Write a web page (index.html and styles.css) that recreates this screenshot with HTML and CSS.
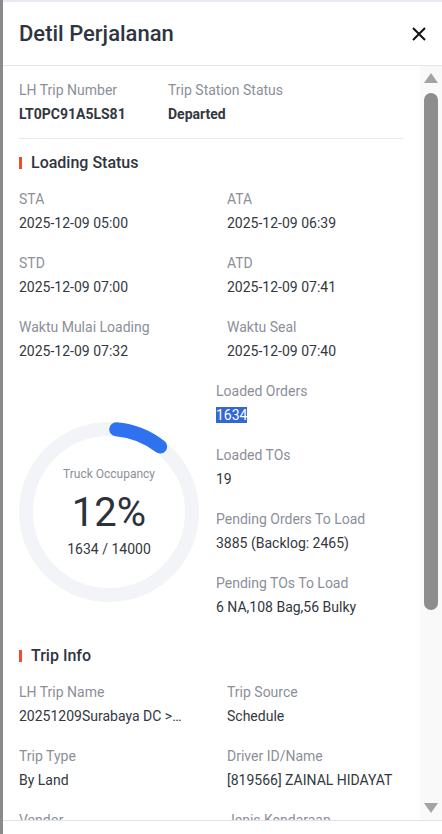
FILE: index.html
```html
<!DOCTYPE html>
<html lang="id">
<head>
  <meta charset="UTF-8" />
  <title>Detil Perjalanan</title>
  <link rel="stylesheet" href="styles.css">
</head>
<body>
  <div class="page">
    <div class="backdrop"></div>
    <div class="drawer">
      <div class="header">
        <h1>Detil Perjalanan</h1>
        <svg class="close" width="14" height="14" viewBox="0 0 14 14">
          <path d="M1 1L13 13M13 1L1 13" stroke="#111" stroke-width="2" />
        </svg>
      </div>

      <div class="body">
        <div class="content">
          <div class="top-info">
            <div class="item first">
              <div class="label">LH Trip Number</div>
              <div class="value bold">LT0PC91A5LS81</div>
            </div>
            <div class="item">
              <div class="label">Trip Station Status</div>
              <div class="value bold">Departed</div>
            </div>
          </div>
          <div class="divider"></div>

          <div class="section-title">Loading Status</div>
          <div class="grid">
            <div class="item">
              <div class="label">STA</div>
              <div class="value">2025-12-09 05:00</div>
            </div>
            <div class="item">
              <div class="label">ATA</div>
              <div class="value">2025-12-09 06:39</div>
            </div>
            <div class="item">
              <div class="label">STD</div>
              <div class="value">2025-12-09 07:00</div>
            </div>
            <div class="item">
              <div class="label">ATD</div>
              <div class="value">2025-12-09 07:41</div>
            </div>
            <div class="item">
              <div class="label">Waktu Mulai Loading</div>
              <div class="value">2025-12-09 07:32</div>
            </div>
            <div class="item">
              <div class="label">Waktu Seal</div>
              <div class="value">2025-12-09 07:40</div>
            </div>
          </div>

          <div class="occupancy">
            <div class="donut-col">
              <div class="donut">
                <svg width="180" height="180" viewBox="0 0 180 180">
                  <circle cx="90" cy="90" r="83" fill="none" stroke="#f3f4f8" stroke-width="14" />
                  <path d="M97.2 7.3A83 83 0 0 1 141.1 24.6" fill="none" stroke="#2f72f0" stroke-width="14" stroke-linecap="round" />
                </svg>
                <div class="donut-text">
                  <div class="donut-label">Truck Occupancy</div>
                  <div class="donut-pct">12%</div>
                  <div class="donut-sub">1634 / 14000</div>
                </div>
              </div>
            </div>
            <div class="stats">
              <div class="item">
                <div class="label">Loaded Orders</div>
                <div class="value"><span class="selected">1634</span></div>
              </div>
              <div class="item">
                <div class="label">Loaded TOs</div>
                <div class="value">19</div>
              </div>
              <div class="item">
                <div class="label">Pending Orders To Load</div>
                <div class="value">3885 (Backlog: 2465)</div>
              </div>
              <div class="item">
                <div class="label">Pending TOs To Load</div>
                <div class="value">6 NA,108 Bag,56 Bulky</div>
              </div>
            </div>
          </div>

          <div class="section-title">Trip Info</div>
          <div class="grid">
            <div class="item">
              <div class="label">LH Trip Name</div>
              <div class="value clip">20251209Surabaya DC &gt; Jakarta Hub</div>
            </div>
            <div class="item">
              <div class="label">Trip Source</div>
              <div class="value">Schedule</div>
            </div>
            <div class="item">
              <div class="label">Trip Type</div>
              <div class="value">By Land</div>
            </div>
            <div class="item">
              <div class="label">Driver ID/Name</div>
              <div class="value">[819566] ZAINAL HIDAYAT</div>
            </div>
            <div class="item">
              <div class="label">Vendor</div>
              <div class="value">PT Logistik</div>
            </div>
            <div class="item">
              <div class="label">Jenis Kendaraan</div>
              <div class="value">CDD</div>
            </div>
          </div>
        </div>

        <div class="scrollbar">
          <div class="arrow up"></div>
          <div class="thumb"></div>
          <div class="arrow down"></div>
        </div>
      </div>

      <div class="footer"></div>
    </div>
  </div>
</body>
</html>
```

FILE: styles.css
```css
body {
  margin: 0;
  font-family: Roboto, "Noto Sans", sans-serif;
  color: #333840;
  background: #fff;
}
.page {
  display: flex;
  height: 834px;
  overflow: hidden;
}
.backdrop {
  width: 3px;
  background: #8a8a8a;
}
.drawer {
  flex: 1;
  display: flex;
  flex-direction: column;
  border-top: 2px solid #e9e9f3;
  background: #fff;
}
.header {
  height: 63px;
  display: flex;
  align-items: center;
  justify-content: space-between;
  padding: 0 16px;
  border-bottom: 1px solid #e5e6eb;
}
.header h1 {
  margin: 0;
  font-size: 22px;
  font-weight: 500;
  color: #2f3540;
}
.close {
  margin-top: 1px;
}
.body {
  height: 754px;
  display: flex;
  overflow: hidden;
}
.content {
  flex: 1;
  padding: 14px 17px 0 16px;
}
.top-info {
  display: flex;
}
.top-info .first {
  width: 149px;
}
.item {
  margin-bottom: 20px;
}
.top-info .item {
  margin-bottom: 14px;
}
.label {
  font-size: 14px;
  line-height: 20px;
  color: #8b8f99;
  margin-bottom: 4px;
  white-space: nowrap;
}
.value {
  font-size: 14px;
  line-height: 20px;
  color: #333840;
  white-space: nowrap;
}
.bold {
  font-weight: 700;
}
.clip {
  width: 165px;
  overflow: hidden;
  text-overflow: ellipsis;
}
.divider {
  height: 1px;
  background: #e8e9ee;
}
.section-title {
  display: flex;
  align-items: center;
  gap: 9px;
  font-size: 16px;
  font-weight: 500;
  line-height: 22px;
  color: #2f3540;
  margin: 13px 0 15px;
}
.section-title::before {
  content: "";
  width: 3px;
  height: 12px;
  background: #ee4d2d;
}
.occupancy + .section-title {
  margin-top: 8px;
}
.grid {
  display: grid;
  grid-template-columns: 208px 1fr;
}
.occupancy {
  display: flex;
}
.donut-col {
  width: 197px;
  display: flex;
  align-items: center;
  padding-top: 6px;
}
.donut {
  position: relative;
  width: 180px;
  height: 180px;
}
.donut svg {
  position: absolute;
  left: 0;
  top: 0;
}
.donut-text {
  position: absolute;
  left: 0;
  right: 0;
  top: 44px;
  text-align: center;
}
.donut-label {
  font-size: 12px;
  line-height: 16px;
  color: #8b8f99;
  margin-bottom: 7px;
}
.donut-pct {
  font-size: 40px;
  line-height: 48px;
  color: #2c313b;
  margin-bottom: 2px;
}
.donut-sub {
  font-size: 14px;
  line-height: 20px;
  color: #333840;
}
.selected {
  background: #3367d6;
  color: #fff;
}
.scrollbar {
  width: 22px;
  background: #f9f9f9;
  display: flex;
  flex-direction: column;
  padding-left: 4px;
  box-sizing: border-box;
}
.arrow {
  width: 0;
  height: 0;
  border-left: 7px solid transparent;
  border-right: 7px solid transparent;
}
.arrow.up {
  margin-top: 7px;
  border-bottom: 10px solid #a3a3a3;
}
.arrow.down {
  margin-top: auto;
  margin-bottom: 7px;
  border-top: 10px solid #a3a3a3;
}
.thumb {
  width: 14px;
  height: 517px;
  margin-top: 10px;
  border-radius: 7px;
  background: #8d8d8d;
}
.footer {
  height: 13px;
  border-top: 1px solid #e2e2ea;
}
```
